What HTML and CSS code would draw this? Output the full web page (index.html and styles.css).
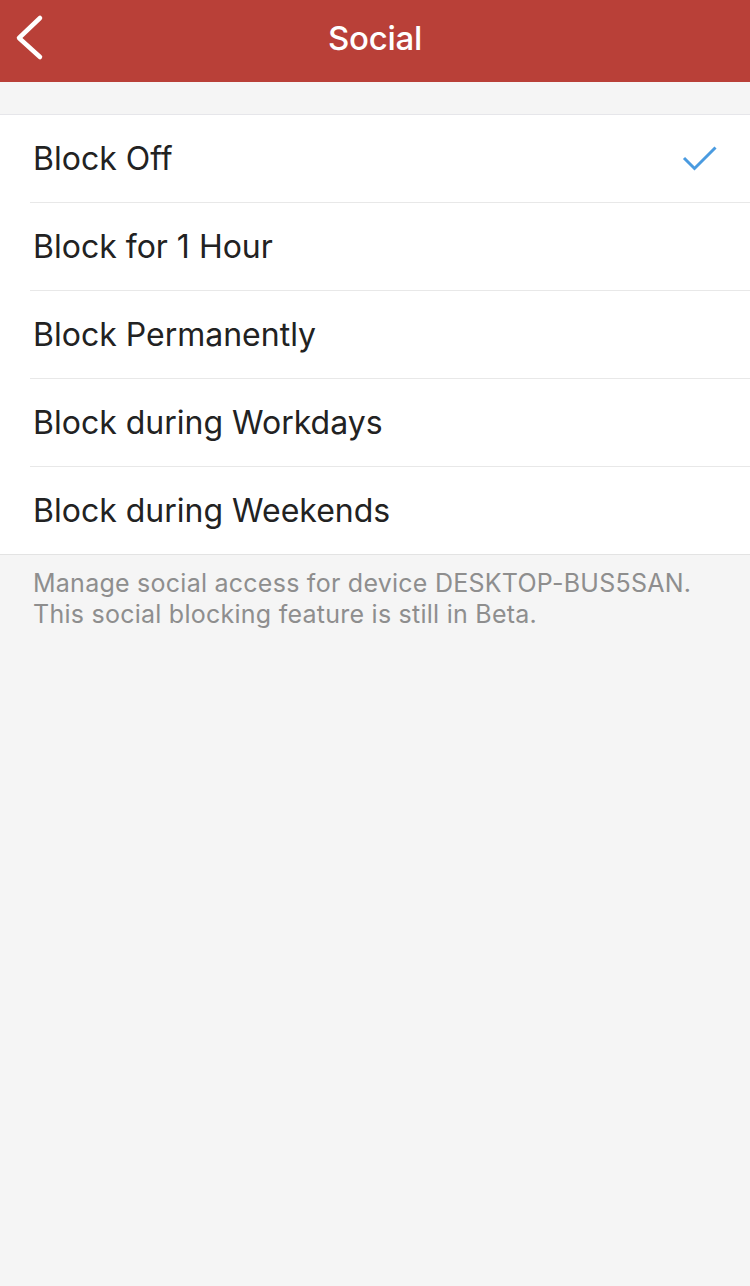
FILE: index.html
```html
<!DOCTYPE html>
<html>
<head>
<meta charset="utf-8">
<link rel="stylesheet" href="styles.css">
</head>
<body>
<header class="navbar">
  <button class="back" aria-label="Back">
    <svg width="30" height="48" viewBox="0 0 30 48"><path d="M25 4 L4 24 L25 43" fill="none" stroke="#fff" stroke-width="4.5" stroke-linecap="round" stroke-linejoin="round"/></svg>
  </button>
  <h1 class="title">Social</h1>
</header>
<main class="content">
  <ul class="list">
    <li class="row"><span class="label">Block Off</span>
      <svg class="check" width="36" height="26" viewBox="0 0 36 26"><path d="M2 8 L12.5 18.5 L33.5 -2.5" transform="translate(0,4)" fill="none" stroke="#4a9be0" stroke-width="3"/></svg>
    </li>
    <li class="row"><span class="label">Block for 1 Hour</span></li>
    <li class="row"><span class="label">Block Permanently</span></li>
    <li class="row"><span class="label">Block during Workdays</span></li>
    <li class="row"><span class="label">Block during Weekends</span></li>
  </ul>
  <p class="footer">Manage social access for device DESKTOP-BUS5SAN.<br>This social blocking feature is still in Beta.</p>
</main>
</body>
</html>
```

FILE: styles.css
```css
* { box-sizing: border-box; }
html, body { margin: 0; padding: 0; }
body {
  width: 750px;
  min-height: 1286px;
  background: #f5f5f5;
  font-family: Inter, "Noto Sans", "Liberation Sans", sans-serif;
}
.navbar {
  height: 82px;
  background: #b94038;
  display: flex;
  align-items: center;
  justify-content: center;
  position: relative;
}
.back {
  position: absolute;
  left: 15px;
  top: 14px;
  background: none;
  border: 0;
  padding: 0;
  margin: 0;
  line-height: 0;
}
.title {
  margin: 0;
  color: #fff;
  font-size: 33px;
  font-weight: 500;
  letter-spacing: -0.3px;
  margin-top: -6px;
}
.content { padding-top: 32px; }
.list {
  list-style: none;
  margin: 0;
  padding: 0 0 0 30px;
  background: #fff;
  border-top: 1px solid #e6e6ea;
  border-bottom: 1px solid #e3e3e3;
}
.row {
  height: 88px;
  display: flex;
  align-items: center;
  justify-content: space-between;
  padding: 0 32px 0 3px;
  border-bottom: 1px solid #e8e8e8;
}
.row:last-child { border-bottom: 0; height: 87px; }
.label {
  font-size: 32px;
  color: #222;
  letter-spacing: 0;
}
.check { display: block; }
.footer {
  margin: 0;
  padding: 13px 33px 0;
  font-size: 25px;
  line-height: 31px;
  color: #8e8e8e;
  letter-spacing: 0.25px;
}
```
